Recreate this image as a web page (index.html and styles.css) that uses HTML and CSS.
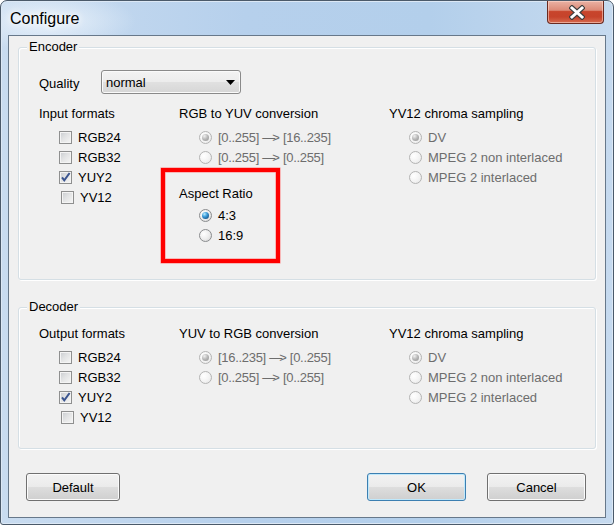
FILE: index.html
```html
<!DOCTYPE html>
<html>
<head>
<meta charset="utf-8">
<title>Configure</title>
<link rel="stylesheet" href="styles.css">
</head>
<body>
<div class="window">
  <div class="titlebar">
    <span class="title">Configure</span>
    <div class="close">
      <svg width="16" height="15" viewBox="0 0 16 15">
        <path d="M3 3 L13 12 M13 3 L3 12" stroke="#3d3d3d" stroke-width="5.2" stroke-linecap="square" fill="none"/>
        <path d="M3 3 L13 12 M13 3 L3 12" stroke="#ffffff" stroke-width="3" stroke-linecap="square" fill="none"/>
      </svg>
    </div>
  </div>
  <div class="client">
    <div class="group encoder">
      <span class="legend">Encoder</span>
      <div class="quality-row">
        <span class="quality-label">Quality</span>
        <div class="combo">
          <span class="combo-text">normal</span>
          <svg class="combo-arrow" width="9" height="5" viewBox="0 0 9 5"><path d="M0 0 H9 L4.5 5 Z" fill="#000"/></svg>
        </div>
      </div>
      <div class="columns">
        <div class="col col1">
          <div class="head">Input formats</div>
          <div class="item"><span class="cb"></span>RGB24</div>
          <div class="item"><span class="cb"></span>RGB32</div>
          <div class="item"><span class="cb checked"><svg width="13" height="13" viewBox="0 0 13 13"><path d="M3 6.3 L5.3 9.4 L10.6 2" stroke="#3b558f" stroke-width="2" fill="none"/></svg></span>YUY2</div>
          <div class="item shifted"><span class="cb"></span>YV12</div>
        </div>
        <div class="col col2">
          <div class="head">RGB to YUV conversion</div>
          <div class="item disabled range"><span class="radio on"></span>[0..255] <span class="dash">—</span>&gt; [16..235]</div>
          <div class="item disabled range"><span class="radio"></span>[0..255] <span class="dash">—</span>&gt; [0..255]</div>
          <div class="aspect">
            <span class="highlight"></span>
            <div class="head">Aspect Ratio</div>
            <div class="item"><span class="radio on"></span>4:3</div>
            <div class="item"><span class="radio"></span>16:9</div>
          </div>
        </div>
        <div class="col col3">
          <div class="head">YV12 chroma sampling</div>
          <div class="item disabled"><span class="radio on"></span>DV</div>
          <div class="item disabled"><span class="radio"></span>MPEG 2 non interlaced</div>
          <div class="item disabled"><span class="radio"></span>MPEG 2 interlaced</div>
        </div>
      </div>
    </div>

    <div class="group decoder">
      <span class="legend">Decoder</span>
      <div class="columns">
        <div class="col col1">
          <div class="head">Output formats</div>
          <div class="item"><span class="cb"></span>RGB24</div>
          <div class="item"><span class="cb"></span>RGB32</div>
          <div class="item"><span class="cb checked"><svg width="13" height="13" viewBox="0 0 13 13"><path d="M3 6.3 L5.3 9.4 L10.6 2" stroke="#3b558f" stroke-width="2" fill="none"/></svg></span>YUY2</div>
          <div class="item shifted"><span class="cb"></span>YV12</div>
        </div>
        <div class="col col2">
          <div class="head">YUV to RGB conversion</div>
          <div class="item disabled range"><span class="radio on"></span>[16..235] <span class="dash">—</span>&gt; [0..255]</div>
          <div class="item disabled range"><span class="radio"></span>[0..255] <span class="dash">—</span>&gt; [0..255]</div>
        </div>
        <div class="col col3">
          <div class="head">YV12 chroma sampling</div>
          <div class="item disabled"><span class="radio on"></span>DV</div>
          <div class="item disabled"><span class="radio"></span>MPEG 2 non interlaced</div>
          <div class="item disabled"><span class="radio"></span>MPEG 2 interlaced</div>
        </div>
      </div>
    </div>

    <div class="buttons">
      <div class="btn btn-default">Default</div>
      <div class="btn btn-ok">OK</div>
      <div class="btn btn-cancel">Cancel</div>
    </div>
  </div>
</div>
</body>
</html>
```
FILE: styles.css
```css
html, body {
  margin: 0;
  padding: 0;
  background: #ffffff;
}

body {
  font-family: "Liberation Sans", Arial, sans-serif;
  font-size: 13px;
  color: #000;
}

.window {
  width: 614px;
  height: 525px;
  box-sizing: border-box;
  border: 1px solid #4b5a6a;
  border-radius: 7px 7px 3px 3px;
  padding: 0 7px 6px 7px;
  background:
    radial-gradient(ellipse 90px 30px at 45px 20px, rgba(235, 243, 251, 0.95), rgba(235, 243, 251, 0) 100%),
    linear-gradient(90deg, #c9dcf0 0%, #b6d0ec 40%, #b3cfeb 70%, #c6daef 100%);
  box-shadow: inset 0 0 0 1px #dce8f5;
  display: flex;
  flex-direction: column;
}

.titlebar {
  height: 34px;
  display: flex;
  align-items: center;
  padding-left: 2px;
  flex-shrink: 0;
}

.title {
  font-size: 16px;
  color: #000;
  margin-top: 2px;
  text-shadow: 0 0 6px #ffffff, 0 0 10px #ffffff;
}

.close {
  margin-left: auto;
  margin-right: 2px;
  align-self: flex-start;
  width: 57px;
  height: 23px;
  box-sizing: border-box;
  border: 1px solid #6a2a20;
  border-top: none;
  border-radius: 0 0 4px 4px;
  background: linear-gradient(#eab2a4 0%, #dc8a77 42%, #c8452c 48%, #c6432b 72%, #d66a4f 100%);
  box-shadow: inset 0 0 0 1px rgba(255, 220, 210, 0.55);
  display: flex;
  align-items: center;
  justify-content: center;
}

.close svg {
  margin-left: 3px;
}

.client {
  height: 483px;
  box-sizing: border-box;
  border: 1px solid #67788a;
  background: #f0f0f0;
  display: flex;
  flex-direction: column;
  flex-shrink: 0;
}

.group {
  position: relative;
  margin: 0 9px;
  box-sizing: border-box;
  border: 1px solid #d5dfe5;
  border-radius: 3px;
  box-shadow: inset 1px 1px 0 #ffffff, 1px 1px 0 #ffffff;
  padding-left: 20px;
}

.encoder {
  margin-top: 11px;
  height: 233px;
  padding-top: 22px;
}

.decoder {
  margin-top: 27px;
  height: 142px;
  padding-top: 16px;
}

.legend {
  position: absolute;
  left: 8px;
  top: -9px;
  padding: 0 2px;
  line-height: 15px;
  background: #f0f0f0;
}

.quality-row {
  display: flex;
  align-items: center;
  height: 24px;
}

.quality-label {
  width: 62px;
  margin-top: 3px;
}

.combo {
  width: 140px;
  height: 24px;
  box-sizing: border-box;
  border: 1px solid #8a8a8a;
  border-radius: 3px;
  background: linear-gradient(#f3f3f3 0%, #ececec 50%, #e0e0e0 52%, #d6d6d6 100%);
  box-shadow: inset 0 0 0 1px #fafafa;
  display: flex;
  align-items: center;
  padding-left: 4px;
  padding-right: 5px;
}

.combo-text {
  flex: 1;
}

.columns {
  display: flex;
}

.encoder .columns {
  margin-top: 10px;
}

.col1 { width: 140px; }
.col2 { width: 210px; }
.col3 { flex: 1; }

.head {
  height: 20px;
  line-height: 20px;
  margin-bottom: 3px;
  white-space: nowrap;
}

.item {
  height: 20px;
  display: flex;
  align-items: center;
  white-space: pre;
}

.item.disabled {
  color: #6d6d6d;
}

.range {
  letter-spacing: -0.3px;
}

.dash {
  letter-spacing: -3px;
}

.cb {
  width: 13px;
  height: 13px;
  box-sizing: border-box;
  margin-left: 20px;
  margin-right: 6px;
  border: 1px solid #8e8f8f;
  background: linear-gradient(135deg, #c8cbcf 0%, #e2e3e4 45%, #f6f6f6 100%);
  box-shadow: inset 0 0 0 1px #f4f4f4;
  position: relative;
  flex-shrink: 0;
}

.cb svg {
  position: absolute;
  left: -1px;
  top: -1px;
}

.shifted .cb {
  margin-left: 22px;
}

.radio {
  width: 13px;
  height: 13px;
  box-sizing: border-box;
  margin-left: 20px;
  margin-right: 6px;
  border-radius: 50%;
  border: 1px solid #8a8c8e;
  background: radial-gradient(circle at 35% 35%, #ffffff 0%, #ececec 55%, #cfcfcf 100%);
  position: relative;
  flex-shrink: 0;
}

.radio.on::after {
  content: "";
  position: absolute;
  left: 2px;
  top: 2px;
  width: 7px;
  height: 7px;
  border-radius: 50%;
  background: radial-gradient(circle at 35% 30%, #b8ecff 0%, #3a9ad8 40%, #134e82 85%, #0d3559 100%);
}

.disabled .radio {
  border-color: #b4b4b4;
  background: radial-gradient(circle at 35% 35%, #ffffff 0%, #f3f3f3 55%, #e2e2e2 100%);
}

.disabled .radio.on::after {
  background: radial-gradient(circle at 35% 30%, #f0f0f0 0%, #b5b5b5 50%, #929292 100%);
}

.aspect {
  position: relative;
  margin-top: 17px;
}

.aspect .head {
  margin-bottom: 1px;
}

.highlight {
  position: absolute;
  left: -18px;
  top: -16px;
  width: 119px;
  height: 95px;
  box-sizing: border-box;
  border: 4px solid #ff0000;
  box-shadow: 0 0 0 0.5px #ff8080, inset 0 0 0 0.5px #ff8080;
}

.buttons {
  display: flex;
  margin-top: 24px;
  padding-left: 17px;
  padding-right: 19px;
}

.btn {
  height: 28px;
  box-sizing: border-box;
  border: 1px solid #707070;
  border-radius: 3px;
  background: linear-gradient(#f2f2f2 0%, #ebebeb 48%, #dddddd 52%, #cfcfcf 100%);
  box-shadow: inset 0 0 0 1px #fbfbfb;
  display: flex;
  align-items: center;
  justify-content: center;
}

.btn-default {
  width: 94px;
}

.btn-ok {
  width: 99px;
  margin-left: auto;
  border-color: #3c7fb1;
  box-shadow: inset 0 0 0 1px #bfe8fb;
}

.btn-cancel {
  width: 99px;
  margin-left: 21px;
}
```
